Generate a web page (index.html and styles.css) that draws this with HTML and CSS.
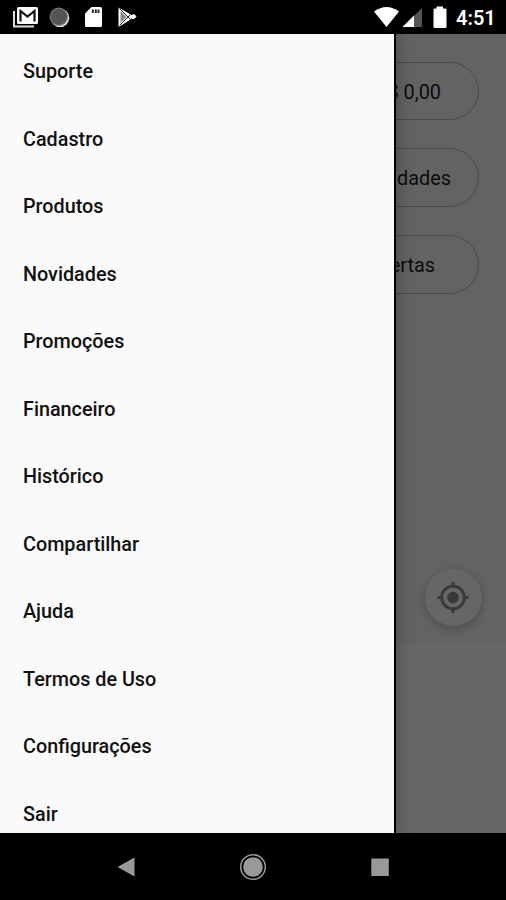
FILE: index.html
```html
<!DOCTYPE html>
<html lang="pt-BR">
<head>
<meta charset="utf-8">
<title>Menu</title>
<link rel="stylesheet" href="styles.css">
</head>
<body>
<div class="screen">
  <header class="status">
    <svg class="status-left" width="150" height="34" viewBox="0 0 150 34">
      <path d="M14 11V26.500H34" fill="none" stroke="#ddd" stroke-width="2"/>
      <rect x="17" y="7" width="21" height="17" rx="1.500" fill="#fff"/>
      <path d="M20.500 21.500V11L27.500 16.500L34.500 11V21.500" fill="none" stroke="#111" stroke-width="2.200"/>
      <circle cx="60" cy="17.800" r="9.300" fill="#ddd"/>
      <circle cx="58.800" cy="16.700" r="9.200" fill="#777"/>
      <circle cx="58.800" cy="16.700" r="8" fill="#555"/>
      <path d="M91.500 7H100.500Q102 7 102 8.500V25.500Q102 27 100.500 27H86.500Q85 27 85 25.500V13.500Z" fill="#fff"/>
      <path d="M92.800 9.500V13M95.800 9.500V13M98.500 9.500V13" stroke="#222" stroke-width="1.900"/>
      <path d="M118.500 7.500L129 13.500L131.500 15Q134 13 136.500 16.500Q134 20.500 131.500 18.500L129 20.500L118.500 27Z" fill="#fff"/>
      <path d="M120.500 11L126.500 17L120.500 23Z" fill="#888"/>
      <path d="M119.500 8.500L130.500 19.500M119.500 25.500L130.500 14.500" stroke="#222" stroke-width="1"/>
    </svg>
    <svg class="status-right" width="90" height="34" viewBox="366 0 90 34">
      <path d="M374 11.500Q386.500 2.500 399 11.500L386.500 27Z" fill="#fff"/>
      <path d="M402.500 27L422 8V27Z" fill="#555"/>
      <path d="M402.500 27L414 15.500V27Z" fill="#fff"/>
      <path d="M436.500 6.500H443V8.500H445.500Q446.500 8.500 446.500 9.500V27Q446.500 28 445.500 28H434.500Q433.500 28 433.500 27V9.500Q433.500 8.500 434.500 8.500H436.500Z" fill="#fff"/>
    </svg>
    <time class="clock">4:51</time>
  </header>

  <div class="stage">
    <main class="page">
      <div class="pill pill-balance">R$ 0,00</div>
      <div class="pill">Novidades</div>
      <div class="pill pill-offers">Ofertas</div>
      <button class="locate" aria-label="Localização">
        <svg width="33" height="33" viewBox="-16 -16.500 33 33">
          <circle r="11.300" fill="none" stroke="#383838" stroke-width="2.800"/>
          <circle r="5.800" fill="#383838"/>
          <path d="M0 -15.500V-10M0 10V15.500M-15.500 0H-10M10 0H15.500" stroke="#383838" stroke-width="2.800"/>
        </svg>
      </button>
      <div class="footer-area"></div>
    </main>
    <nav class="drawer">
      <a class="item">Suporte</a>
      <a class="item">Cadastro</a>
      <a class="item">Produtos</a>
      <a class="item">Novidades</a>
      <a class="item">Promoções</a>
      <a class="item">Financeiro</a>
      <a class="item">Histórico</a>
      <a class="item">Compartilhar</a>
      <a class="item">Ajuda</a>
      <a class="item">Termos de Uso</a>
      <a class="item">Configurações</a>
      <a class="item">Sair</a>
    </nav>
  </div>

  <footer class="navbar">
    <svg width="20" height="20" viewBox="0 0 20 20"><path d="M1.500 10L18.500 0.500V19.500Z" fill="#999"/></svg>
    <svg width="28" height="28" viewBox="-14 -14 28 28"><circle r="12.300" fill="none" stroke="#999" stroke-width="1.500"/><circle r="9.800" fill="#999"/></svg>
    <svg width="20" height="20" viewBox="0 0 20 20"><rect x="1.300" y="1.500" width="17.500" height="17.500" fill="#999"/></svg>
  </footer>
</div>
</body>
</html>
```

FILE: styles.css
```css
* {
  box-sizing: border-box;
}

body {
  margin: 0;
  background: #000;
  font-family: Roboto, sans-serif;
}

.screen {
  display: flex;
  flex-direction: column;
  width: 506px;
  height: 900px;
  overflow: hidden;
}

.status {
  display: flex;
  flex: none;
  height: 34px;
  background: #000;
  color: #fff;
}

.status-right {
  margin-left: 216px;
}

.clock {
  font-size: 20px;
  font-weight: 600;
  line-height: 36px;
}

.stage {
  display: grid;
  grid-template-columns: 506px;
  flex: none;
  height: 799px;
  overflow: hidden;
}

.page,
.drawer {
  grid-area: 1 / 1;
}

.page {
  display: flex;
  flex-direction: column;
  align-items: flex-end;
  padding-top: 28px;
  background: #636363;
}

.pill {
  flex: none;
  width: 152px;
  height: 59px;
  margin: 0 27.5px 28px 0;
  border: 1.5px solid #4a4a4a;
  border-radius: 30px;
  color: #0c0c0c;
  font-size: 19.9px;
  line-height: 59px;
  text-align: right;
  padding-right: 26.5px;
}

.pill-balance {
  height: 58px;
  padding-right: 36.5px;
}

.pill-offers {
  padding-right: 42.5px;
}

.locate {
  display: grid;
  place-items: center;
  width: 57px;
  height: 57px;
  margin: 247px 24px 0 0;
  padding: 0;
  border: 0;
  border-radius: 50%;
  background: #666;
  box-shadow: 0 3px 10px rgba(0, 0, 0, 0.22);
}

.footer-area {
  flex: 1;
  width: 100%;
  margin-top: 17px;
  background: #666;
}

.drawer {
  z-index: 1;
  width: 396px;
  padding-top: 4.4px;
  border-right: 2px solid #000;
  background: #fafafa;
  box-shadow: 0 0 16px rgba(0, 0, 0, 0.3);
  overflow: hidden;
}

.item {
  display: block;
  height: 67.5px;
  padding-left: 23px;
  color: #111;
  font-size: 19.8px;
  font-weight: 500;
  line-height: 67.5px;
}

.navbar {
  display: flex;
  flex: 1;
  align-items: center;
  justify-content: space-between;
  padding: 0 116px;
  background: #000;
}
```
